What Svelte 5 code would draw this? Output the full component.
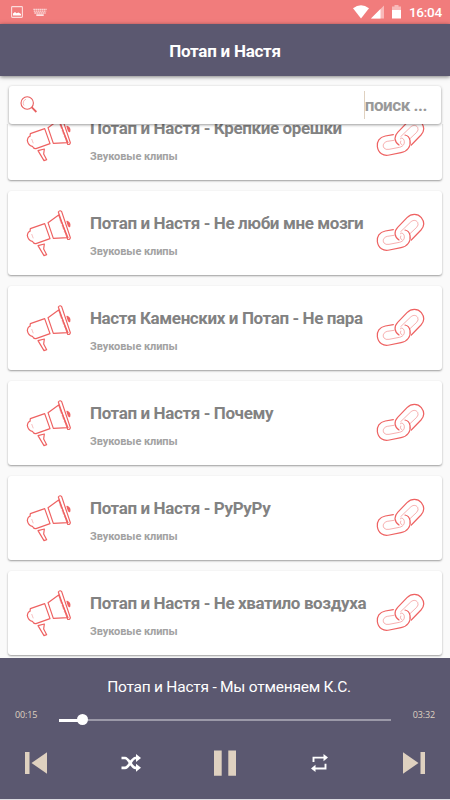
<script>
  const tracks = [
    'Потап и Настя - Крепкие орешки',
    'Потап и Настя - Не люби мне мозги',
    'Настя Каменских и Потап - Не пара',
    'Потап и Настя - Почему',
    'Потап и Настя - РуРуРу',
    'Потап и Настя - Не хватило воздуха'
  ];
  const progress = 7;
</script>

<div class="screen">
  <div class="status">
    <svg class="pic" width="12" height="12" viewBox="0 0 12 12">
      <rect x=".6" y=".6" width="10.8" height="10.8" rx=".8" fill="none" stroke="#fbdcdc" stroke-width="1.1" />
      <path d="M2 9.5V7.5l2-1.6 1.5 1.3L7.5 6.5 10 8v1.5z" fill="#fff" />
    </svg>
    <svg class="keys" width="14" height="9" viewBox="0 0 14 9">
      <path d="M.4 1.4h13.2M.8 3.2h12.4M1.4 5h11.2" stroke="#fbdcdc" stroke-width="1.3" stroke-dasharray="1.5 .5" />
      <path d="M3.3 7.1h7.4" stroke="#fff" stroke-width="1.4" />
    </svg>
    <span class="grow"></span>
    <svg width="16" height="14" viewBox="0 0 16 14"><path d="M0 3.2Q8-2.8 16 3.2L8 13.5z" fill="#fff" /></svg>
    <svg class="cell" width="13" height="14" viewBox="0 0 13 14">
      <path d="M0 13.5L13 .5v13z" fill="#f8b9b9" /><path d="M0 13.5L9.5 4v9.5z" fill="#fff" />
    </svg>
    <svg class="battery" width="9" height="14" viewBox="0 0 9 14">
      <path d="M0 1.5h2.5V0h4v1.5H9V5H0z" fill="#f8b9b9" /><path d="M0 5h9v8.5H0z" fill="#fff" />
    </svg>
    <span class="clock">16:04</span>
  </div>
  <header>Потап и Настя</header>

  <main>
    <div class="search">
      <svg width="18" height="18" viewBox="0 0 18 18" fill="none" stroke="#e85f5f">
        <circle cx="7.2" cy="7" r="6.2" stroke-width="1.1" />
        <path d="M4 9.5A4.1 4.1 0 0 1 6 3.2" stroke-width=".7" opacity=".6" />
        <path d="M11.6 11.2l4.8 4.8" stroke-width="1.8" />
      </svg>
      <span class="query"><i></i>поиск ...</span>
    </div>
    <div class="list">
      {#each tracks as title}
        <article>
          <svg class="horn" width="60" height="60" viewBox="0 0 180 180" fill="none" stroke="#ee6262" stroke-width="3.6" stroke-linejoin="round">
            <path d="M31 71L74 56 90 101 48 116Q41 117 37 109 25 107 22 92 23 80 30 79z" />
            <path d="M84 53L116 30 144 98 100 100z" />
            <path d="M115 21Q120 14 125 20L151 98Q150 105 143 103z" />
            <path d="M141 49Q152 53 149 65L145 62z" fill="#ee6262" />
            <path d="M54 122L73 117 71 132 80 149 72 152z" />
            <path d="M35 87l6 16M119 43l15 40" stroke-width="2" opacity=".6" stroke-dasharray="14 5" />
          </svg>
          <div class="words">
            <h2>{title}</h2>
            <p>Звуковые клипы</p>
          </div>
          <svg class="chain" width="60" height="60" viewBox="0 0 180 180" fill="none" stroke="#ee6262" stroke-width="3.6" stroke-linecap="round">
            <path d="M70 74L46 78C28 81 20 95 22 110 25 130 40 139 58 135L93 128C113 124 123 109 120 91Q117 77 105 75" />
            <path d="M87 105C73 96 71 80 83 67L111 38C124 25 143 25 154 38 164 51 163 64 153 75L124 105" />
            <g stroke-width="2" opacity=".75">
              <path d="M72 91L52 94C40 97 37 107 42 114Q47 120 57 118L88 112C102 109 106 98 101 88Q96 80 91 86" />
              <path d="M96 105Q87 99 92 93M92 80L122 51C131 43 139 46 143 52Q147 60 140 67L120 86" />
            </g>
          </svg>
        </article>
      {/each}
    </div>
  </main>

  <footer>
    <div class="now">Потап и Настя - Мы отменяем К.С.</div>
    <div class="seek">
      <span class="time">00:15</span>
      <div class="bar"><div class="done" style="width:{progress}%"><b></b></div></div>
      <span class="time end">03:32</span>
    </div>
    <div class="controls">
      <svg width="22" height="22" viewBox="0 0 22 22" fill="#dfd1c0"><path d="M0 0h4.5v22H0zM22 .3v21.4L6.5 11z" /></svg>
      <svg width="20" height="18" viewBox="0 0 20 18" fill="none" stroke="#fff" stroke-width="2.7">
        <path d="M.5 4H4C8 4 10.5 13.8 14.5 13.8H16M.5 13.8H4C8 13.8 10.5 4 14.5 4H16" />
        <path d="M15 0l5 4-5 4zM15 9.8l5 4-5 4z" fill="#fff" stroke="none" />
      </svg>
      <svg class="pause" width="22" height="26" viewBox="0 0 22 26" fill="#dfd1c0"><path d="M0 .5h7.7v25.2H0zM14.3.5H22v25.2h-7.7z" /></svg>
      <svg class="repeat" width="17" height="18" viewBox="0 0 17 18" fill="none" stroke="#fff" stroke-width="1.9">
        <path d="M2.5 8V3.6H13M14.5 9.7v4.8H4" />
        <path d="M12.5 0L17 3.6l-4.5 3.6zM4.5 10.8L0 14.5l4.5 3.5z" fill="#fff" stroke="none" />
      </svg>
      <svg width="22" height="22" viewBox="0 0 22 22" fill="#dfd1c0"><path d="M17.5 0H22v22h-4.5zM0 .3v21.4L15.5 11z" /></svg>
    </div>
  </footer>
</div>

<style>
  .screen {
    width: 450px;
    height: 800px;
    box-sizing: border-box;
    border-bottom: 1px solid #dddce2;
    display: flex;
    flex-direction: column;
    overflow: hidden;
    background: #fafafa;
    font-family: Roboto, "Noto Sans", sans-serif;
  }
  svg { display: block; flex: none; }
  .status {
    flex: 0 0 24px;
    box-sizing: border-box;
    padding: 0 8px 0 11px;
    display: flex;
    align-items: center;
    background: #f17c7c;
    color: #fff;
  }
  .keys { margin-left: 10px; }
  .grow { flex: 1; }
  .cell { margin-left: 2px; }
  .battery { margin-left: 8px; }
  .clock { margin-left: 8px; font-size: 13.5px; font-weight: 500; line-height: 24px; width: 33px; letter-spacing: -.3px; white-space: nowrap; }
  header {
    flex: 0 0 52px;
    box-sizing: border-box;
    padding-top: 3px;
    line-height: 49px;
    text-align: center;
    background: #5b5870;
    color: #fff;
    font-size: 17px;
    font-weight: 700;
    letter-spacing: -.25px;
    box-shadow: 0 1px 4px rgba(0, 0, 0, .5);
    z-index: 2;
  }
  main { flex: 1; min-height: 0; display: flex; flex-direction: column; padding-top: 10px; }
  .search {
    flex: 0 0 38px;
    margin: 0 9px;
    box-sizing: border-box;
    padding: 0 14px 0 11px;
    display: flex;
    align-items: center;
    justify-content: space-between;
    background: #fff;
    border-radius: 3px;
    box-shadow: 0 1px 3px rgba(0, 0, 0, .4);
    z-index: 1;
  }
  .query { display: flex; align-items: center; color: #999; font-size: 17px; font-weight: 700; letter-spacing: -.45px; }
  .query i { width: 1px; height: 28px; background: #dfd1c0; }
  .list {
    flex: 1;
    min-height: 0;
    overflow: hidden;
    display: flex;
    flex-direction: column;
    justify-content: flex-end;
    gap: 11px;
    padding: 0 8px 3px;
  }
  article {
    flex: 0 0 84px;
    display: flex;
    box-sizing: border-box;
    padding: 14px 13px 0 12px;
    background: #fff;
    border-radius: 3px;
    box-shadow: 0 1px 2px rgba(0, 0, 0, .38);
  }
  .words { flex: 1; min-width: 0; padding: 7px 0 0 10px; white-space: nowrap; }
  h2 { margin: 0; font-size: 17px; line-height: 22px; font-weight: 700; letter-spacing: -.39px; color: #828282; }
  p { margin: 11px 0 0; font-size: 11px; line-height: 14px; font-weight: 700; letter-spacing: -.08px; color: #a2a2a2; }
  .chain { margin-right: -1px; }
  footer { flex: 0 0 141px; background: #5b5870; color: #fff; z-index: 1; }
  .now { padding: 18px 0 0 8px; text-align: center; font-size: 15.5px; line-height: 22px; letter-spacing: -.23px; }
  .seek { display: flex; align-items: center; height: 43px; padding: 0 15px; }
  .time {
    width: 44px;
    padding-bottom: 9px;
    color: #dfd1c0;
    font: 9px/12px "Open Sans", "Noto Sans", sans-serif;
    letter-spacing: -.15px;
  }
  .end { text-align: right; }
  .bar { flex: 1; height: 2px; background: #9b99a8; }
  .done { position: relative; height: 3px; background: #fff; }
  .done b { position: absolute; right: -6px; top: -5px; width: 11px; height: 11px; border-radius: 50%; background: #fff; }
  .controls { display: flex; align-items: center; justify-content: space-between; height: 44px; padding: 0 25px; }
  .pause { margin: 0 2px 0 -2px; }
  .repeat { margin: 0 1px 0 -1px; }
</style>
